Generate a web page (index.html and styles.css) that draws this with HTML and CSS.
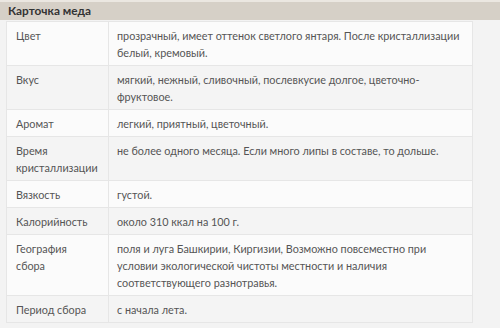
FILE: index.html
```html
<!DOCTYPE html>
<html lang="ru">
<head>
<meta charset="utf-8">
<title>Карточка меда</title>
<link rel="stylesheet" href="styles.css">
</head>
<body>
<div class="card-title">Карточка меда</div>
<div class="wrap">
<table class="props">
<tr><td class="k">Цвет</td><td class="v">прозрачный, имеет оттенок светлого янтаря. После кристаллизации белый, кремовый.</td></tr>
<tr><td class="k">Вкус</td><td class="v">мягкий, нежный, сливочный, послевкусие долгое, цветочно-фруктовое.</td></tr>
<tr><td class="k">Аромат</td><td class="v">легкий, приятный, цветочный.</td></tr>
<tr><td class="k">Время кристаллизации</td><td class="v">не более одного месяца. Если много липы в составе, то дольше.</td></tr>
<tr><td class="k">Вязкость</td><td class="v">густой.</td></tr>
<tr><td class="k">Калорийность</td><td class="v">около 310 ккал на 100 г.</td></tr>
<tr><td class="k">География сбора</td><td class="v">поля и луга Башкирии, Киргизии, Возможно повсеместно при условии экологической чистоты местности и наличия соответствующего разнотравья.</td></tr>
<tr><td class="k">Период сбора</td><td class="v">с начала лета.</td></tr>
</table>
</div>
</body>
</html>
```

FILE: styles.css
```css
html, body {
  margin: 0;
  padding: 0;
}
body {
  background: #f3f3f3;
  font-family: "Lato", "Noto Sans", sans-serif;
  font-size: 10.8px;
  color: #555;
}
.card-title {
  height: 18px;
  line-height: 18px;
  background: #d6d0c7;
  border-top: 2px solid #ebe7e1;
  padding-left: 8px;
  font-size: 11.8px;
  font-weight: bold;
  color: #333;
}
.wrap {
  padding: 1px 27px 0 6px;
}
.props {
  width: 467px;
  border-collapse: collapse;
  border: 1px solid #e0e0e0;
}
.props td {
  border: 1px solid #e6e6e6;
  padding: 5px 8px 4px 8px;
  line-height: 17px;
  vertical-align: top;
}
.props tr:nth-child(odd) td {
  background: #fbfbfb;
}
.props tr:nth-child(even) td {
  background: #f4f4f4;
}
.props .k {
  width: 82px;
  padding-left: 9px;
  padding-right: 10px;
}
```
